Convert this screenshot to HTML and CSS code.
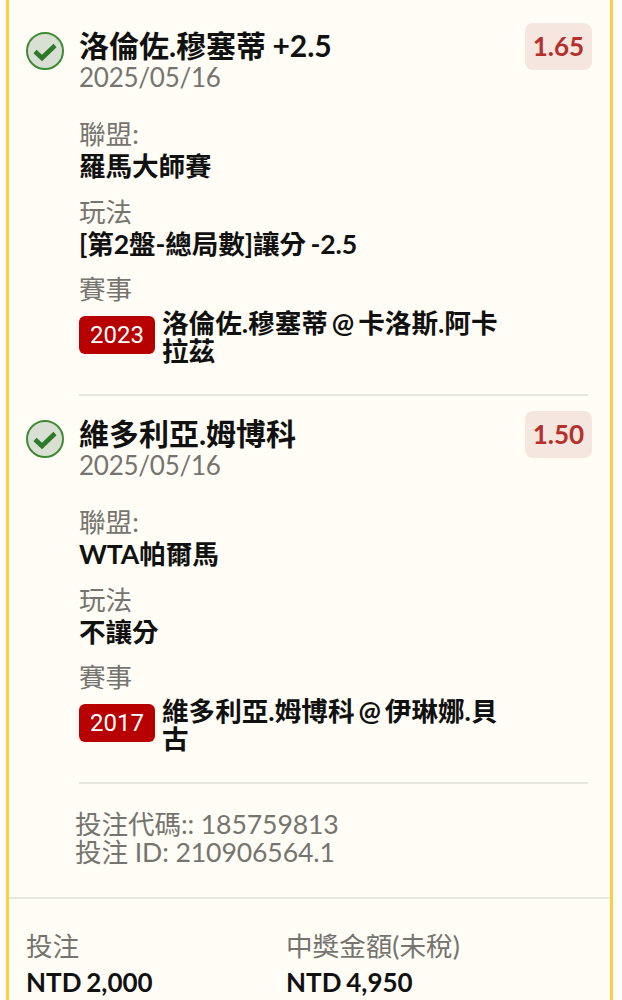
FILE: index.html
```html
<!DOCTYPE html>
<html lang="zh-Hant">
<head>
<meta charset="utf-8">
<title>投注</title>
<link rel="stylesheet" href="styles.css">
</head>
<body>
<main class="card">
  <section class="legs">
    <article class="leg">
      <svg class="check" viewBox="0 0 40 40"><circle cx="20" cy="20" r="18" fill="#d9e0d3" stroke="#3f8a35" stroke-width="2"/><path d="M10 20.5l7 6.5 13-12.5" fill="none" stroke="#2f7a28" stroke-width="4.6"/></svg>
      <div class="leg-body">
        <div class="leg-head">
          <div>
            <h2 class="title">洛倫佐.穆塞蒂 +2.5</h2>
            <div class="date">2025/05/16</div>
          </div>
          <div class="odds">1.65</div>
        </div>
        <div class="label first">聯盟:</div>
        <div class="value">羅馬大師賽</div>
        <div class="label">玩法</div>
        <div class="value">[第2盤-總局數]讓分 -2.5</div>
        <div class="label">賽事</div>
        <div class="event">
          <span class="year">2023</span>
          <span class="event-name">洛倫佐.穆塞蒂 @ 卡洛斯.阿卡拉茲</span>
        </div>
      </div>
    </article>
    <article class="leg">
      <svg class="check" viewBox="0 0 40 40"><circle cx="20" cy="20" r="18" fill="#d9e0d3" stroke="#3f8a35" stroke-width="2"/><path d="M10 20.5l7 6.5 13-12.5" fill="none" stroke="#2f7a28" stroke-width="4.6"/></svg>
      <div class="leg-body">
        <div class="leg-head">
          <div>
            <h2 class="title">維多利亞.姆博科</h2>
            <div class="date">2025/05/16</div>
          </div>
          <div class="odds">1.50</div>
        </div>
        <div class="label first">聯盟:</div>
        <div class="value">WTA帕爾馬</div>
        <div class="label">玩法</div>
        <div class="value">不讓分</div>
        <div class="label">賽事</div>
        <div class="event">
          <span class="year">2017</span>
          <span class="event-name">維多利亞.姆博科 @ 伊琳娜.貝古</span>
        </div>
      </div>
    </article>
  </section>
  <section class="codes">
    <div>投注代碼:: 185759813</div>
    <div>投注 ID: 210906564.1</div>
  </section>
  <section class="totals">
    <div class="total">
      <div class="total-label">投注</div>
      <div class="total-value">NTD 2,000</div>
    </div>
    <div class="total">
      <div class="total-label">中獎金額(未稅)</div>
      <div class="total-value">NTD 4,950</div>
    </div>
  </section>
</main>
</body>
</html>
```

FILE: styles.css
```css
* { box-sizing: border-box; }
html, body { margin: 0; padding: 0; background: #fff; height: 1000px; overflow: hidden; }
body {
  font-family: Lato, "Noto Sans CJK TC", sans-serif;
  font-size: 26px;
  color: #111;
  padding-left: 6px;
  padding-right: 9px;
}
.card {
  background: #fffdf6;
  border-left: 3px solid #fdd03b;
  border-right: 3px solid #fdd03b;
  height: 1000px;
  overflow: hidden;
}
.legs { padding: 23px 18px 0 16px; }
.leg { display: flex; gap: 14px; align-items: flex-start; }
.check { width: 40px; height: 40px; flex: none; margin-top: 8px; }
.leg-body {
  flex: 1;
  min-width: 0;
  padding-bottom: 29px;
  margin-bottom: 15px;
  border-bottom: 2px solid #e9e6df;
  margin-right: 4px;
}
.leg-head { display: flex; justify-content: space-between; align-items: flex-start; margin-right: -4px; }
.title { margin: 0; font-size: 30px; font-weight: 700; line-height: 32px; padding-top: 6px; word-spacing: -1px; }
.date { color: #76746f; font-size: 26px; line-height: 30px; letter-spacing: -0.25px; margin-top: 1px; }
.odds {
  width: 67px;
  height: 47px;
  background: #f5e6e0;
  color: #b5302b;
  border-radius: 8px;
  font-weight: 700;
  font-size: 26px;
  line-height: 47px;
  text-align: center;
}
.label { color: #76746f; font-size: 26.6px; line-height: 32px; margin-top: 13.5px; }
.label.first { margin-top: 26px; }
.value { font-weight: 700; font-size: 26.6px; line-height: 32px; word-spacing: -2px; letter-spacing: -0.1px; }
.event { display: flex; gap: 7px; align-items: flex-start; margin-top: 3px; }
.year {
  flex: none;
  width: 76px;
  height: 38px;
  margin-top: 8px;
  background: #b80000;
  color: #fff;
  border-radius: 6px;
  font-family: Roboto, sans-serif;
  font-size: 24px;
  line-height: 39px;
  text-align: center;
}
.event-name { width: 345px; padding-top: 1px; font-weight: 700; font-size: 26.6px; line-height: 28px; word-spacing: -2.5px; }
.codes { padding: 0 0 0 66px; margin-top: 11px; color: #76746f; font-size: 26.6px; line-height: 28px; height: 87px; letter-spacing: -0.1px; }
.totals { display: flex; border-top: 2px solid #e9e6df; padding: 30px 17px 0; }
.total { width: 260px; }
.total-label { color: #76746f; font-size: 26.6px; line-height: 34px; }
.total-value { font-weight: 700; font-size: 26px; line-height: 34px; margin-top: 2px; word-spacing: -1.5px; }
```
